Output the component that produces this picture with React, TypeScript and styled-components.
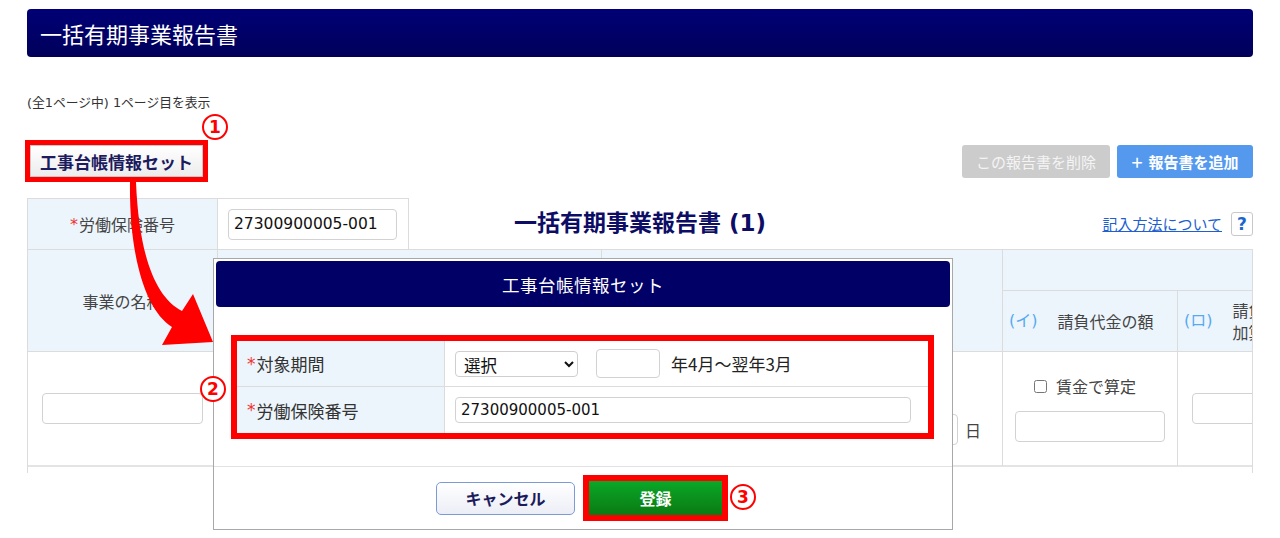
import React from 'react';
import styled, { createGlobalStyle } from 'styled-components';

const sans = `"DejaVu Sans", "Noto Sans CJK JP", sans-serif`;
const jp = `"Noto Sans CJK JP", sans-serif`;

const GlobalStyle = createGlobalStyle`
  html, body {
    margin: 0;
    padding: 0;
    background: #fff;
  }
  body {
    font-family: ${sans};
    color: #333;
    overflow: hidden;
  }
  * { box-sizing: border-box; }
`;

const Page = styled.div`
  position: relative;
  width: 1280px;
  height: 538px;
  padding: 9px 27px 0;
  overflow: hidden;
`;

const TitleBar = styled.div`
  height: 48px;
  border-radius: 4px;
  background: linear-gradient(#000076, #00005a);
  color: #fff;
  display: flex;
  align-items: center;
  padding: 0 13px;
  font-family: ${jp};
  font-size: 22px;
  line-height: 1;
`;

const PageInfo = styled.div`
  margin-top: 38px;
  font-size: 12.8px;
  line-height: 16px;
  color: #333;
`;

const Toolbar = styled.div`
  margin-top: 34px;
  display: flex;
  justify-content: space-between;
  align-items: flex-start;
  height: 33px;
`;

const LedgerButton = styled.button`
  margin-left: 3px;
  width: 173px;
  height: 32px;
  border: 1px solid #c9c9c9;
  background: linear-gradient(#ffffff, #ececec);
  color: #1b1b5e;
  font-family: ${jp};
  font-weight: 700;
  font-size: 17px;
  line-height: 1;
  padding: 0;
  outline: 5px solid #ff0000;
`;

const RightButtons = styled.div`
  display: flex;
  gap: 7px;
`;

const ActionButton = styled.button<{ $tone: 'gray' | 'blue'; $w: number }>`
  width: ${p => p.$w}px;
  height: 33px;
  border: none;
  border-radius: 3px;
  background: ${p => (p.$tone === 'gray' ? '#cccccc' : '#5599ee')};
  color: ${p => (p.$tone === 'gray' ? '#f4f4f4' : '#ffffff')};
  font-family: ${jp};
  font-size: 15px;
  font-weight: ${p => (p.$tone === 'gray' ? 400 : 700)};
  line-height: 1;
  display: flex;
  align-items: center;
  justify-content: center;
  gap: 6px;
  padding: 0;
`;

const Plus = styled.span`
  font-weight: 400;
  font-size: 20px;
`;

const TopArea = styled.div`
  margin-top: 20px;
  height: 51px;
  display: grid;
  grid-template-columns: 1fr auto 1fr;
`;

const NumberTable = styled.div`
  width: 382px;
  display: flex;
  border: 1px solid #dcdcdc;
  border-bottom: none;
`;

const LabelCell = styled.div`
  width: 190px;
  flex: none;
  background: #edf5fc;
  border-right: 1px solid #dcdcdc;
  display: flex;
  align-items: center;
  justify-content: center;
  font-family: ${jp};
  font-size: 16px;
  color: #444;
`;

const Req = styled.span`
  color: #ee3333;
  font-family: ${sans};
  margin-right: 1px;
`;

const ValueCell = styled.div`
  flex: 1;
  display: flex;
  align-items: center;
  padding-left: 10px;
`;

const TextInput = styled.input<{ $w: number; $h?: number; $size?: number }>`
  width: ${p => p.$w}px;
  height: ${p => p.$h ?? 31}px;
  border: 1px solid #d2d2d2;
  border-radius: 4px;
  background: #fff;
  font-family: ${sans};
  font-size: ${p => p.$size ?? 15.5}px;
  color: #111;
  padding: 0 5px;
  outline: none;
`;

const ReportTitle = styled.div`
  align-self: center;
  font-family: ${sans};
  font-weight: 700;
  font-size: 23px;
  color: #0d0d66;
  line-height: 1;
`;

const HelpGroup = styled.div`
  justify-self: end;
  align-self: center;
  display: flex;
  align-items: center;
  gap: 9px;
`;

const HelpLink = styled.a`
  font-family: ${jp};
  font-size: 15px;
  color: #1f5fcf;
  text-decoration: underline;
  line-height: 1;
`;

const HelpBox = styled.span`
  width: 22px;
  height: 24px;
  border: 1px solid #c8c8c8;
  border-radius: 3px;
  display: flex;
  align-items: center;
  justify-content: center;
  font-family: ${sans};
  font-weight: 700;
  font-size: 17px;
  color: #1a66cc;
`;

const TableWrap = styled.div`
  border-top: 1px solid #dcdcdc;
  border-left: 1px solid #dcdcdc;
  border-right: 1px solid #dcdcdc;
  overflow: hidden;
  padding-bottom: 6px;
`;

const Grid = styled.div`
  display: grid;
  grid-template-columns: 190px 384px 401px 175px 175px;
  grid-template-rows: 41px 61px 115px;
  width: 1325px;
`;

const Cell = styled.div<{ $col: string; $row: string; $head?: boolean; $start?: boolean }>`
  grid-column: ${p => p.$col};
  grid-row: ${p => p.$row};
  background: ${p => (p.$head ? '#edf5fc' : '#fff')};
  border-right: 1px solid #dcdcdc;
  border-bottom: ${p => (p.$head ? '1px solid #dcdcdc' : '2px solid #e4e4e4')};
  display: flex;
  align-items: center;
  justify-content: ${p => (p.$start ? 'flex-start' : 'center')};
  padding-left: ${p => (p.$start ? 14 : 0)}px;
  font-family: ${jp};
  font-size: 16px;
  color: #444;
`;

const SubHead = styled.div`
  width: 100%;
  display: flex;
  align-items: center;
  gap: 20px;
  padding-left: 6px;
  line-height: 22px;
`;

const Kana = styled.span`
  color: #55aaf0;
  font-family: ${sans};
  font-size: 16px;
`;

const DateRow = styled.div`
  width: 100%;
  align-self: flex-end;
  display: flex;
  align-items: center;
  justify-content: flex-end;
  gap: 7px;
  padding: 0 21px 20px 0;
`;

const CheckStack = styled.div`
  display: flex;
  flex-direction: column;
  align-items: center;
  gap: 14px;
`;

const CheckLine = styled.label`
  display: flex;
  align-items: center;
  gap: 9px;
  line-height: 22px;
  margin-left: -10px;
`;

const Check = styled.input`
  width: 13px;
  height: 13px;
  margin: 0;
`;

const Modal = styled.div`
  position: absolute;
  left: 213px;
  top: 258px;
  width: 740px;
  height: 272px;
  border: 1px solid #a8a8a8;
  background: #fff;
  display: flex;
  flex-direction: column;
  z-index: 3;
`;

const ModalHeader = styled.div`
  margin: 2px 2px 0;
  height: 46px;
  border-radius: 4px;
  background: #000066;
  color: #fff;
  display: flex;
  align-items: center;
  justify-content: center;
  font-family: ${jp};
  font-size: 17.5px;
  letter-spacing: 0.5px;
`;

const ModalBody = styled.div`
  padding: 34px 24px 33px 23px;
`;

const FormTable = styled.div`
  outline: 6px solid #ff0000;
`;

const FormRow = styled.div<{ $last?: boolean }>`
  height: 46px;
  display: flex;
  border-bottom: ${p => (p.$last ? 'none' : '1px solid #dcdcdc')};
`;

const FormLabel = styled.div`
  width: 208px;
  flex: none;
  background: #edf5fc;
  border-right: 1px solid #dcdcdc;
  display: flex;
  align-items: center;
  padding-left: 10px;
  font-family: ${jp};
  font-size: 17px;
  color: #333;
`;

const FormValue = styled.div`
  flex: 1;
  display: flex;
  align-items: center;
  padding-left: 10px;
  font-family: ${jp};
  font-size: 17px;
  color: #222;
`;

const PeriodSelect = styled.select`
  width: 123px;
  height: 26px;
  border: 1px solid #cfcfcf;
  border-radius: 4px;
  background: #fff;
  font-family: ${jp};
  font-size: 16.5px;
  color: #111;
  padding: 0 4px;
  margin-right: 18px;
`;

const PeriodText = styled.span`
  margin-left: 11px;
  line-height: 1;
`;

const ModalFooter = styled.div`
  flex: 1;
  border-top: 1px solid #e2e2e2;
  display: flex;
  align-items: center;
  justify-content: center;
  gap: 14px;
  padding-right: 8px;
`;

const CancelButton = styled.button`
  width: 139px;
  height: 33px;
  border: 1.5px solid #7c9bd6;
  border-radius: 5px;
  background: linear-gradient(#ffffff, #eceef6);
  color: #1c1c5c;
  font-family: ${jp};
  font-weight: 700;
  font-size: 16px;
  padding: 0;
`;

const SubmitButton = styled.button`
  width: 133px;
  height: 34px;
  border: none;
  background: linear-gradient(#0aa828, #0a7a12);
  color: #fff;
  font-family: ${jp};
  font-weight: 700;
  font-size: 16px;
  padding: 0;
  outline: 6px solid #ff0000;
`;

const Badge = styled.span<{ $x: number; $y: number }>`
  position: absolute;
  left: ${p => p.$x - 13}px;
  top: ${p => p.$y - 13}px;
  width: 26px;
  height: 26px;
  border: 2.5px solid #ff0000;
  border-radius: 50%;
  display: flex;
  align-items: center;
  justify-content: center;
  color: #ff0000;
  font-family: "DejaVu Sans", sans-serif;
  font-weight: 700;
  font-size: 17px;
  line-height: 1;
  background: #fff;
  z-index: 6;
`;

const ArrowLayer = styled.svg`
  position: absolute;
  left: 0;
  top: 0;
  width: 260px;
  height: 360px;
  pointer-events: none;
  z-index: 5;
`;

export default function App() {
  return (
    <>
      <GlobalStyle />
      <Page>
        <TitleBar>一括有期事業報告書</TitleBar>
        <PageInfo>(全1ページ中) 1ページ目を表示</PageInfo>

        <Toolbar>
          <LedgerButton>工事台帳情報セット</LedgerButton>
          <RightButtons>
            <ActionButton $tone="gray" $w={148}>この報告書を削除</ActionButton>
            <ActionButton $tone="blue" $w={136}>
              <Plus>+</Plus>
              報告書を追加
            </ActionButton>
          </RightButtons>
        </Toolbar>

        <TopArea>
          <NumberTable>
            <LabelCell>
              <Req>*</Req>労働保険番号
            </LabelCell>
            <ValueCell>
              <TextInput $w={169} defaultValue="27300900005-001" />
            </ValueCell>
          </NumberTable>
          <ReportTitle>一括有期事業報告書 (1)</ReportTitle>
          <HelpGroup>
            <HelpLink>記入方法について</HelpLink>
            <HelpBox>?</HelpBox>
          </HelpGroup>
        </TopArea>

        <TableWrap>
          <Grid>
            <Cell $col="1" $row="1 / 3" $head>事業の名称</Cell>
            <Cell $col="2" $row="1 / 3" $head>事業場の所在地</Cell>
            <Cell $col="3" $row="1 / 3" $head>事業の期間</Cell>
            <Cell $col="4 / 6" $row="1" $head />
            <Cell $col="4" $row="2" $head>
              <SubHead>
                <Kana>(イ)</Kana>
                <span>請負代金の額</span>
              </SubHead>
            </Cell>
            <Cell $col="5" $row="2" $head>
              <SubHead>
                <Kana>(ロ)</Kana>
                <span>
                  請負代金に
                  <br />
                  加算する額
                </span>
              </SubHead>
            </Cell>

            <Cell $col="1" $row="3">
              <TextInput $w={161} />
            </Cell>
            <Cell $col="2" $row="3">
              <TextInput $w={340} />
            </Cell>
            <Cell $col="3" $row="3">
              <DateRow>
                <TextInput $w={60} />年
                <TextInput $w={50} />月
                <TextInput $w={50} />日
              </DateRow>
            </Cell>
            <Cell $col="4" $row="3">
              <CheckStack>
                <CheckLine>
                  <Check type="checkbox" />
                  賃金で算定
                </CheckLine>
                <TextInput $w={150} />
              </CheckStack>
            </Cell>
            <Cell $col="5" $row="3" $start>
              <TextInput $w={150} />
            </Cell>
          </Grid>
        </TableWrap>

        <Modal>
          <ModalHeader>工事台帳情報セット</ModalHeader>
          <ModalBody>
            <FormTable>
              <FormRow>
                <FormLabel>
                  <Req>*</Req>対象期間
                </FormLabel>
                <FormValue>
                  <PeriodSelect defaultValue="">
                    <option value="">選択</option>
                  </PeriodSelect>
                  <TextInput $w={64} $h={29} />
                  <PeriodText>年4月〜翌年3月</PeriodText>
                </FormValue>
              </FormRow>
              <FormRow $last>
                <FormLabel>
                  <Req>*</Req>労働保険番号
                </FormLabel>
                <FormValue>
                  <TextInput $w={456} $h={26} $size={15} defaultValue="27300900005-001" />
                </FormValue>
              </FormRow>
            </FormTable>
          </ModalBody>
          <ModalFooter>
            <CancelButton>キャンセル</CancelButton>
            <SubmitButton>登録</SubmitButton>
          </ModalFooter>
        </Modal>

        <ArrowLayer viewBox="0 0 260 360">
          <path
            d="M130 182 C129 255 145 310 172 327 L162 345 L213 342 L193 294 L182 311 C155 297 139 255 136 182 Z"
            fill="#ff0000"
          />
        </ArrowLayer>

        <Badge $x={215} $y={127}>1</Badge>
        <Badge $x={213} $y={389}>2</Badge>
        <Badge $x={743} $y={497}>3</Badge>
      </Page>
    </>
  );
}
